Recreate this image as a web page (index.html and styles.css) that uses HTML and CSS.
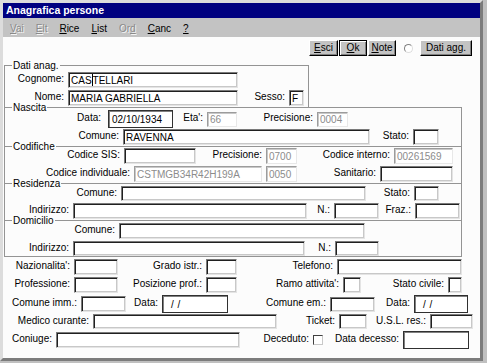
FILE: index.html
```html
<html>
	<head>
		<title>Anagrafica persone</title>
		<meta charset="UTF-8">
		<link rel="stylesheet" href="styles.css">
	</head>
	<body>
		<div class="window">
			<div class="titlebar">Anagrafica persone</div>
			<div class="menubar">
				<span class="off"><u>V</u>ai</span>
				<span class="off"><u>E</u>lt</span>
				<span><u>R</u>ice</span>
				<span><u>L</u>ist</span>
				<span class="off">Or<u>d</u></span>
				<span><u>C</u>anc</span>
				<span><u>?</u></span>
			</div>
			<div class="client">
				<div class="toolbar">
					<span class="btn b-esci"><u>E</u>sci</span>
					<span class="btn b-ok default"><u>O</u>k</span>
					<span class="btn b-note"><u>N</u>ote</span>
					<span class="radio"></span>
					<span class="btn b-agg">Dati agg.</span>
				</div>

				<div class="grp g-anag">
					<span class="legend">Dati anag.</span>
					<div class="row r-cog">
						<span class="lbl">Cognome:</span>
						<div class="fld">CAS<span class="caret"></span>TELLARI</div>
					</div>
					<div class="row r-nome">
						<span class="lbl">Nome:</span>
						<div class="fld">MARIA GABRIELLA</div>
						<span class="lbl">Sesso:</span>
						<div class="fld">F</div>
					</div>
				</div>

				<div class="grp g-wide g-nasc">
					<span class="legend">Nascita</span>
					<div class="row r-data">
						<span class="lbl lbl-date">Data:</span>
						<div class="fld date">02/10/1934</div>
						<span class="lbl">Eta':</span>
						<div class="fld dis short">66</div>
						<span class="lbl">Precisione:</span>
						<div class="fld dis short">0004</div>
					</div>
					<div class="row r-ncom">
						<span class="lbl">Comune:</span>
						<div class="fld">RAVENNA</div>
						<span class="lbl">Stato:</span>
						<div class="fld"></div>
					</div>
				</div>

				<div class="grp g-wide g-cod">
					<span class="legend">Codifiche</span>
					<div class="row r-sis">
						<span class="lbl">Codice SIS:</span>
						<div class="fld"></div>
						<span class="lbl">Precisione:</span>
						<div class="fld dis">0700</div>
						<span class="lbl">Codice interno:</span>
						<div class="fld dis">00261569</div>
					</div>
					<div class="row r-cind">
						<span class="lbl">Codice individuale:</span>
						<div class="fld dis">CSTMGB34R42H199A</div>
						<span class="lbl"></span>
						<div class="fld dis">0050</div>
						<span class="lbl">Sanitario:</span>
						<div class="fld"></div>
					</div>
				</div>

				<div class="grp g-wide g-res">
					<span class="legend">Residenza</span>
					<div class="row r-rcom">
						<span class="lbl">Comune:</span>
						<div class="fld short">&nbsp;</div>
						<span class="lbl">Stato:</span>
						<div class="fld short"></div>
					</div>
					<div class="row r-rind">
						<span class="lbl">Indirizzo:</span>
						<div class="fld"></div>
						<span class="lbl">N.:</span>
						<div class="fld"></div>
						<span class="lbl">Fraz.:</span>
						<div class="fld"></div>
					</div>
				</div>

				<div class="grp g-wide g-dom">
					<span class="legend">Domicilio</span>
					<div class="row r-dcom">
						<span class="lbl">Comune:</span>
						<div class="fld"></div>
					</div>
					<div class="row r-dind">
						<span class="lbl">Indirizzo:</span>
						<div class="fld short"></div>
						<span class="lbl">N.:</span>
						<div class="fld short"></div>
					</div>
				</div>

				<div class="lower">
					<div class="row r-l1">
						<span class="lbl">Nazionalita':</span>
						<div class="fld"></div>
						<span class="lbl">Grado istr.:</span>
						<div class="fld"></div>
						<span class="lbl">Telefono:</span>
						<div class="fld"></div>
					</div>
					<div class="row r-l2">
						<span class="lbl">Professione:</span>
						<div class="fld"></div>
						<span class="lbl">Posizione prof.:</span>
						<div class="fld"></div>
						<span class="lbl">Ramo attivita':</span>
						<div class="fld"></div>
						<span class="lbl">Stato civile:</span>
						<div class="fld"></div>
					</div>
					<div class="row r-l3">
						<span class="lbl">Comune imm.:</span>
						<div class="fld"></div>
						<span class="lbl">Data:</span>
						<div class="fld date slash">/ /</div>
						<span class="lbl">Comune em.:</span>
						<div class="fld short"></div>
						<span class="lbl">Data:</span>
						<div class="fld date slash">/ /</div>
					</div>
					<div class="row r-l4">
						<span class="lbl">Medico curante:</span>
						<div class="fld short"></div>
						<span class="lbl">Ticket:</span>
						<div class="fld short"></div>
						<span class="lbl">U.S.L. res.:</span>
						<div class="fld short"></div>
					</div>
					<div class="row r-l5">
						<span class="lbl">Coniuge:</span>
						<div class="fld"></div>
						<span class="lbl">Deceduto:</span>
						<span class="chk"></span>
						<span class="lbl">Data decesso:</span>
						<div class="fld date"></div>
					</div>
				</div>
			</div>
		</div>
	</body>
</html>
```

FILE: styles.css
```css
body {
	margin: 0;
	background: #c0c0c0;
	color: #000;
	font-family: "Liberation Sans", Arial, sans-serif;
	font-size: 10px;
}
.window {
	box-sizing: border-box;
	width: 483px;
	height: 361px;
	border: 3px solid;
	border-color: #dcdcdc #7c7c7c #7c7c7c #dcdcdc;
	display: flex;
	flex-direction: column;
	background: #fcfcfc;
}
.titlebar {
	height: 15px;
	line-height: 15px;
	padding-left: 3px;
	background: #000080;
	color: #fff;
	font-weight: bold;
	font-size: 10.5px;
}
.menubar {
	height: 19px;
	box-sizing: border-box;
	padding: 2px 0 0 7px;
	display: flex;
	align-items: center;
	gap: 12px;
	background: #c3c3c3;
	font-size: 10px;
}
.menubar .off {
	color: #8a8a8a;
	text-shadow: 1px 1px 0 #f4f4f4;
}
.client {
	flex: 1;
	display: flex;
	flex-direction: column;
}

/* toolbar buttons */
.toolbar {
	display: flex;
	justify-content: flex-end;
	align-items: center;
	height: 16px;
	margin-top: 3px;
	padding-right: 8px;
}
.btn {
	box-sizing: border-box;
	height: 16px;
	line-height: 14px;
	text-align: center;
	background: #c3c3c3;
	border: 1px solid;
	border-color: #fff #000 #000 #fff;
	box-shadow: inset -1px -1px 0 #808080;
}
.btn.default {
	border-color: #000;
	box-shadow: inset 1px 1px 0 #fff, inset -1px -1px 0 #808080;
}
.b-esci { width: 29px; }
.b-ok { width: 28px; margin-left: 1px; }
.b-note { width: 28px; margin-left: 1px; }
.b-agg { width: 52px; margin-left: 7px; }
.radio {
	box-sizing: border-box;
	width: 9px;
	height: 9px;
	margin-left: 8px;
	border-radius: 50%;
	border: 1px solid;
	border-color: #808080 #dcdcdc #dcdcdc #808080;
	background: #fff;
}

/* group boxes */
.grp {
	position: relative;
	margin-left: 1px;
	border: 1px solid #949494;
	display: grid;
	row-gap: 2px;
}
.g-anag {
	width: 305px;
	box-sizing: border-box;
	margin-top: 9px;
	padding: 6px 0 1px;
}
.g-wide {
	width: 458px;
	box-sizing: border-box;
	margin-top: -1px;
}
.g-nasc { padding: 2px 0 1px; row-gap: 1px; }
.g-cod { padding: 1px 0 1px; }
.g-res { padding: 2px 0 1px; }
.g-dom { padding: 2px 0 0; }
.legend {
	position: absolute;
	left: 7px;
	top: -5px;
	padding: 0 1px;
	line-height: 10px;
	background: #fcfcfc;
}

/* rows */
.row {
	display: grid;
	align-items: center;
}
.lbl {
	text-align: right;
	padding-right: 4px;
	padding-bottom: 2px;
	white-space: nowrap;
	line-height: 10px;
}
.lbl-date { padding-right: 7px; }
.r-cog { grid-template-columns: 63px 170px; }
.r-nome { grid-template-columns: 63px 170px 51px 15px; }
.r-data { grid-template-columns: 103px 65px 34px 30px 80px 31px; }
.r-ncom { grid-template-columns: 118px 247px 43px 26px; }
.r-sis { grid-template-columns: 119px 72px 70px 31px 97px 59px; }
.r-cind { grid-template-columns: 129px 128px 4px 31px 83px 73px; }
.r-rcom { grid-template-columns: 116px 245px 48px 25px; }
.r-rind { grid-template-columns: 68px 234px 27px 45px 36px 45px; }
.r-rind .lbl { padding-bottom: 3px; }
.r-dcom { grid-template-columns: 114px 246px; }
.r-dind { grid-template-columns: 68px 232px 30px 44px; }

.lower {
	display: grid;
	row-gap: 2px;
	padding-top: 2px;
}
.r-l1 { grid-template-columns: 71px 44px 88px 31px 100px 125px; }
.r-l2 { grid-template-columns: 71px 44px 88px 31px 106px 18px 87px 14px; }
.r-l3 { grid-template-columns: 78px 45px 36px 66px 102px 45px 39px 54px; }
.r-l4 { grid-template-columns: 90px 184px 62px 28px 63px 43px; margin-top: -1px; }
.r-l5 { grid-template-columns: 53px 184px 73px 10px 80px 66px; }

/* fields */
.fld {
	box-sizing: border-box;
	height: 16px;
	padding-left: 2px;
	display: flex;
	align-items: center;
	white-space: nowrap;
	overflow: hidden;
	background: #fff;
	border: 1px solid;
	border-color: #7a7a7a #e4e4e4 #e4e4e4 #7a7a7a;
	box-shadow: inset 1px 1px 0 #202020, inset -1px -1px 0 #c8c8c8;
}
.fld.short { height: 15px; }
.fld.dis {
	color: #8c8c8c;
	border-color: #9c9c9c #e8e8e8 #e8e8e8 #9c9c9c;
	box-shadow: inset 1px 1px 0 #c8c8c8;
}
.fld.date {
	height: 18px;
	padding-left: 3px;
	border-color: #303030;
	box-shadow: inset 1px 1px 0 #808080;
}
.fld.slash { padding-left: 8px; word-spacing: 1px; }
.caret {
	display: inline-block;
	width: 1px;
	height: 12px;
	background: #000;
}
.chk {
	box-sizing: border-box;
	width: 10px;
	height: 10px;
	background: #fff;
	border: 1px solid;
	border-color: #404040 #c8c8c8 #c8c8c8 #404040;
}
```
